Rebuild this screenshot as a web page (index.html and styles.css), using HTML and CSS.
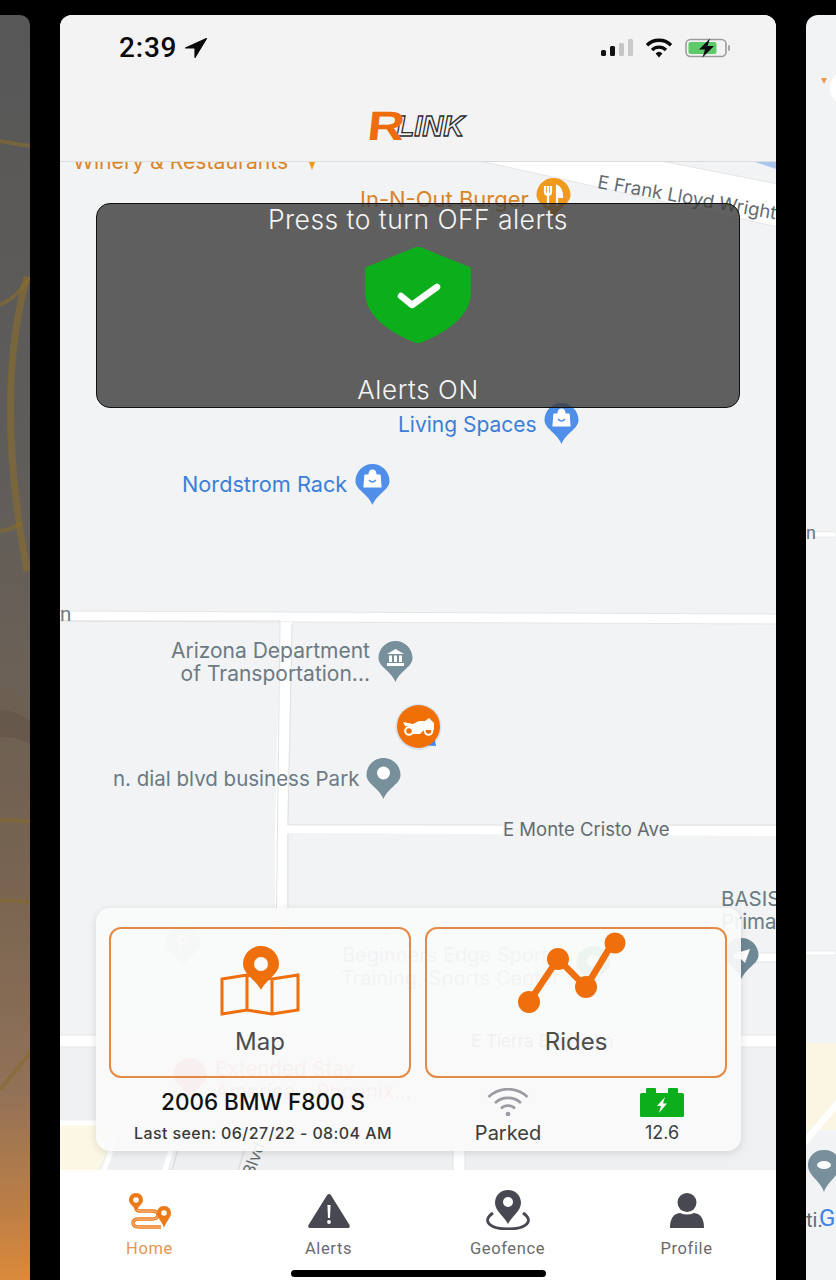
FILE: index.html
```html
<!DOCTYPE html>
<html lang="en">
<head>
<meta charset="utf-8">
<title>RLink</title>
<link rel="stylesheet" href="styles.css">
</head>
<body>
<div class="switcher">
  <aside class="side side-left">
    <svg class="side-art" viewBox="0 0 30 1265" aria-hidden="true">
      <g fill="none" stroke="#8a6d2c" stroke-opacity=".6">
        <path d="M0 126 Q15 129 30 131" stroke-width="4"/>
        <path d="M0 290 Q18 282 30 262" stroke-width="4"/>
        <path d="M27 262 Q-6 380 27 556" stroke-width="7"/>
        <path d="M0 516 Q14 514 21 508" stroke-width="4"/>
        <path d="M0 805 L30 806" stroke-width="4"/>
        <path d="M0 885 L30 887" stroke-width="4"/>
        <path d="M0 1075 L30 1038" stroke-width="4"/>
      </g>
      <path d="M0 695 Q16 695 30 706 V728 Q14 722 0 722Z" fill="#5c4d42" fill-opacity=".4"/>
      <path d="M0 670 Q14 672 30 684 V1265 H0Z" fill="#6f5a48" fill-opacity=".1"/>
    </svg>
  </aside>

  <main class="phone">
    <header class="top">
      <div class="status">
        <div class="clock"><span class="time">2:39</span>
          <svg class="loc" viewBox="0 0 22 20"><path d="M21.500 0.500 L0.500 10 H10 V19.500Z" fill="#0a0a0a" stroke="#0a0a0a" stroke-width="1.200" stroke-linejoin="round"/></svg>
        </div>
        <div class="status-icons">
          <svg class="signal" viewBox="0 0 32 18"><rect x="0" y="11" width="5" height="6" rx="1.500" fill="#111"/><rect x="9" y="7" width="5" height="10" rx="1.500" fill="#111"/><rect x="18" y="4" width="5" height="13" rx="1.500" fill="#c5c5c5"/><rect x="27" y="0" width="5" height="17" rx="1.500" fill="#c9c9c9"/></svg>
          <svg class="wifi-s" viewBox="0 0 28 20"><path d="M2 7.200 A17 17 0 0 1 26 7.200" fill="none" stroke="#0a0a0a" stroke-width="3.400"/><path d="M7 12 A10 10 0 0 1 21 12" fill="none" stroke="#0a0a0a" stroke-width="3.400"/><path d="M10.600 15.400 A5 5 0 0 1 17.400 15.400 L14 19.400Z" fill="#0a0a0a"/></svg>
          <svg class="batt-s" viewBox="0 0 46 20"><rect x="1" y="1.500" width="40" height="17" rx="4.500" fill="none" stroke="#9c9c9c" stroke-width="1.600"/><rect x="3.500" y="4" width="28" height="12" rx="2" fill="#5ccb67"/><rect x="43" y="7" width="2" height="6" rx="1" fill="#a8a8a8"/><path d="M25 0.500 L14 11.500 H20 L17.500 19.500 L29 8 H22.500Z" fill="#0a0a0a"/></svg>
        </div>
      </div>
      <div class="logo"><span class="logo-r">R</span><span class="logo-link">LINK</span></div>
    </header>

    <section class="map">
      <svg class="map-art" viewBox="60 161 716 1009" aria-hidden="true">
        <defs>
          <path id="pin" d="M0 -20 C-9.400 -20 -17 -12.400 -17 -3 C-17 6 -5 9 0 21 C5 9 17 6 17 -3 C17 -12.400 9.400 -20 0 -20Z"/>
        </defs>
        <path d="M755 161 L776 161 V168Z" fill="#a9c6ee"/>
        <g fill="#fff" stroke="#e3e5e7" stroke-width="1">
          <path d="M480 160 L661 160 L778 183 V226Z"/>
          <path d="M58 610 L778 613 V623 L58 620Z"/>
          <path d="M280 621 H292 L287 824 L778 825 V835 L287 832 L287 1040 H275 L275 832 Z" stroke="none"/>
          <path d="M58 1034 H778 V1046 H58Z"/>
          <path d="M740 952 H778 V961 H740Z"/>
        </g>
        <g fill="none" stroke="#dfe1e3">
          <path d="M60 620 H280 L275 1034"/>
          <path d="M292 623 L288 824 H778"/>
          <path d="M288 833 V1034"/>
        </g>
        <path d="M60 1047 H776 V1170 H60Z" fill="#eef0f1"/>
        <path d="M60 1122 H120 L98 1170 H60Z" fill="#fbf7e4"/>
        <path d="M60 1122 H180 Q170 1150 165 1170 M120 1122 L104 1170" fill="none" stroke="#fff" stroke-width="5"/>
        <path d="M180 1140 L172 1170 M250 1130 L238 1170" fill="none" stroke="#dcdedf" stroke-width="1.500"/>
        <path d="M453 1100 H465 V1170 H453Z" fill="#fff" stroke="#e0e2e3"/>

        <use href="#pin" x="553.500" y="197" fill="#ef9a1a"/>
        <path d="M545 185 V191 Q545 194 548 194 Q551 194 551 191 V185 M548 185 V205 M557 205 V185 Q562 187 562 196 H557" stroke="#fff" stroke-width="2.200" fill="none"/>
        <path d="M557 185 Q562 187 562 196 H557Z" fill="#fff"/>
        <path d="M307 156 H317 L312 169Z" fill="#ef9a1a"/>

        <use href="#pin" x="561.500" y="422" fill="#4f8fe9"/>
        <path d="M554 413 H569 L570 425 H553Z M558 413 Q558 408 561.500 408 Q565 408 565 413" fill="#fff" stroke="#fff" stroke-width="1.200" stroke-linejoin="round"/>
        <path d="M558 418 Q561.500 422 565 418" stroke="#4f8fe9" stroke-width="1.500" fill="none"/>
        <use href="#pin" x="372.500" y="483" fill="#4f8fe9"/>
        <path d="M365 474 H380 L381 486 H364Z M369 474 Q369 469 372.500 469 Q376 469 376 474" fill="#fff" stroke="#fff" stroke-width="1.200" stroke-linejoin="round"/>
        <path d="M369 479 Q372.500 483 376 479" stroke="#4f8fe9" stroke-width="1.500" fill="none"/>

        <use href="#pin" x="395.500" y="660" fill="#78909c"/>
        <path d="M395.500 648 L404 653 H387Z M387 662 H404 V665 H387Z M389 654.500 H392 V661 H389Z M394 654.500 H397 V661 H394Z M399 654.500 H402 V661 H399Z" fill="#fff"/>
        <use href="#pin" x="383.500" y="777" fill="#78909c"/>
        <circle cx="383.500" cy="772" r="6.500" fill="#fff"/>

        <use href="#pin" x="183" y="945" fill="#c5cbd6"/>
        <use href="#pin" x="593" y="965" fill="#5bab6e"/>
        <circle cx="593" cy="960" r="6" fill="#fff"/>
        <use href="#pin" x="741.500" y="957" fill="#6f8896"/>
        <path d="M733 953 L750 948 L745 962 L741 958 L735 958Z" fill="#fff"/>
        <use href="#pin" x="190" y="1077" fill="#e57373"/>

        <path d="M420 744 L434 734 L436 745Z" fill="#4285f4"/>
        <circle cx="418.500" cy="726" r="23" fill="#4285f4" fill-opacity=".16"/>
        <circle cx="418.500" cy="725.500" r="21.500" fill="#f07006"/>
        <g fill="#fff">
          <path d="M403 721 L413 723 L419 720 L425 720 L429 717 L434 722 L434 729 L424 729 L420 733 L413 733 L411 726 L405 725Z"/>
          <circle cx="409" cy="730" r="3.800" fill="none" stroke="#fff" stroke-width="2"/>
          <circle cx="428.500" cy="730" r="3.800" fill="none" stroke="#fff" stroke-width="2"/>
        </g>
      </svg>

      <span class="lbl food winery">Winery &amp; Restaurants</span>
      <span class="lbl food innout">In-N-Out Burger</span>
      <span class="lbl road frank">E Frank Lloyd Wright</span>
      <span class="lbl shop living">Living Spaces</span>
      <span class="lbl shop nordstrom">Nordstrom Rack</span>
      <span class="lbl grey edge-n">n</span>
      <span class="lbl grey adot">Arizona Department<br>of Transportation...</span>
      <span class="lbl grey dial">n. dial blvd business Park</span>
      <span class="lbl road monte">E Monte Cristo Ave</span>
      <span class="lbl grey basis">BASIS<br>Prima</span>
      <span class="lbl ghost beginners">Beginners Edge Sports<br>Training, Sports Center</span>
      <span class="lbl road tierra">E Tierra Buena Ln</span>
      <span class="lbl red extended">Extended Stay<br>America - Phoenix...</span>
      <span class="lbl road blvd">Blvd</span>
      <span class="lbl pin-p">P</span>

      <div class="alert">
        <p class="alert-title">Press to turn OFF alerts</p>
        <svg class="shield" viewBox="0 0 108 96"><path d="M54 0 L106 21 V46 C106 70 78 87 54 96 C30 87 2 70 2 46 V21Z" fill="#0dae1c" stroke="#0dae1c" stroke-width="1.500" stroke-linejoin="round"/><path d="M37 49 L48 58 L73 40" fill="none" stroke="#fff" stroke-width="6.500" stroke-linecap="round" stroke-linejoin="round"/></svg>
        <p class="alert-state">Alerts ON</p>
      </div>

      <div class="panel">
        <div class="actions">
          <button class="action">
            <svg class="action-icon" viewBox="0 0 80 70"><path d="M2 33 L27 29 L52 33 L78 29 V64 L52 68 L27 64 L2 68Z M27 29 V64 M52 33 V68" fill="none" stroke="#ee6f0c" stroke-width="3"/><path d="M41 0 C31 0 23 8 23 18 C23 28 36 34 41 44 C46 34 59 28 59 18 C59 8 51 0 41 0Z" fill="#ee6f0c"/><circle cx="41" cy="18" r="7" fill="#fafafa"/></svg>
            <span>Map</span>
          </button>
          <button class="action">
            <svg class="action-icon" viewBox="0 0 120 82"><path d="M13 70 L42 27 L70 55 L99 7" fill="none" stroke="#ee6f0c" stroke-width="6.500"/><circle cx="13" cy="70" r="11" fill="#ee6f0c"/><circle cx="42" cy="27" r="11" fill="#ee6f0c"/><circle cx="70" cy="55" r="11" fill="#ee6f0c"/><circle cx="99" cy="11" r="10.500" fill="#ee6f0c"/></svg>
            <span>Rides</span>
          </button>
        </div>
        <div class="info">
          <div class="vehicle">
            <strong class="vehicle-name">2006 BMW F800 S</strong>
            <span class="seen">Last seen: 06/27/22 - 08:04 AM</span>
          </div>
          <div class="stat">
            <svg class="stat-wifi" viewBox="0 0 42 28"><path d="M1.500 9 A28 28 0 0 1 40.500 9" fill="none" stroke="#9a9ca2" stroke-width="2.600"/><path d="M8 15 A19 19 0 0 1 34 15" fill="none" stroke="#9a9ca2" stroke-width="2.600"/><path d="M14 20.500 A10 10 0 0 1 28 20.500" fill="none" stroke="#9a9ca2" stroke-width="2.600"/><circle cx="21" cy="26" r="2.300" fill="#9a9ca2"/></svg>
            <span class="parked">Parked</span>
          </div>
          <div class="stat">
            <svg class="stat-batt" viewBox="0 0 44 30"><rect x="6" y="0" width="10" height="6" rx="1" fill="#0dae1c"/><rect x="28" y="0" width="10" height="6" rx="1" fill="#0dae1c"/><rect x="0" y="5" width="44" height="24" rx="1.500" fill="#0dae1c"/><path d="M25 9 L17 18 H21 L19 25 L27 15.500 H23Z" fill="#fff"/></svg>
            <span>12.6</span>
          </div>
        </div>
      </div>
    </section>

    <nav class="tabs">
      <a class="tab tab-on">
        <svg class="tab-icon" viewBox="0 0 44 36"><path d="M8 14 V15 Q8 18 12 18 H24 Q30 18 30 22 Q30 26 24 26 H11 Q5 26 5 30 Q5 34 11 34 H33" fill="none" stroke="#ee7a17" stroke-width="3.400"/><path d="M8 14 V15 Q8 18 12 18 H24 Q30 18 30 22 Q30 26 24 26 H11 Q5 26 5 30 Q5 34 11 34 H33" fill="none" stroke="#fbd9bd" stroke-width=".8"/><path d="M8 0 C3.500 0 1 3.500 1 7 C1 11 6 13 8 18 C10 13 15 11 15 7 C15 3.500 12.500 0 8 0Z" fill="#ee7a17"/><circle cx="8" cy="7" r="2.800" fill="#fff"/><path d="M36 13 C31.500 13 29 16.500 29 20 C29 25 34 28 36 35 C38 28 43 25 43 20 C43 16.500 40.500 13 36 13Z" fill="#ee7a17"/><circle cx="36" cy="20" r="2.800" fill="#fff"/></svg>
        <span>Home</span>
      </a>
      <a class="tab">
        <svg class="tab-icon" viewBox="0 0 44 36"><path d="M22 1 Q23.500 1 24.500 3 L42.500 32 Q43.500 35 41 35 H3 Q0.500 35 1.500 32 L19.500 3 Q20.500 1 22 1Z" fill="#484852"/><path d="M20.400 12 H23.600 L23 25 H21Z" fill="#fff"/><circle cx="22" cy="29" r="1.900" fill="#fff"/></svg>
        <span>Alerts</span>
      </a>
      <a class="tab">
        <svg class="tab-icon tab-geo" viewBox="0 0 50 40"><path d="M25 0 C17 0 12 6 12 13 C12 21 21 26 25 34 C29 26 38 21 38 13 C38 6 33 0 25 0Z" fill="#484852"/><circle cx="25" cy="12" r="5" fill="#fff"/><path d="M10 23 C-2 31 7 39 25 39 C43 39 52 31 40 23" fill="none" stroke="#484852" stroke-width="2.800"/></svg>
        <span>Geofence</span>
      </a>
      <a class="tab">
        <svg class="tab-icon" viewBox="0 0 44 36"><circle cx="22" cy="9.500" r="9.500" fill="#484852"/><path d="M5 35 Q5 21 15 20 Q22 23 29 20 Q39 21 39 35 H5Z" fill="#484852"/></svg>
        <span>Profile</span>
      </a>
      <i class="home-bar"></i>
    </nav>
  </main>

  <aside class="side side-right">
    <svg class="side-art" viewBox="806 15 30 1265" aria-hidden="true">
      <rect x="806" y="15" width="30" height="1265" fill="#f1f3f4"/>
      <circle cx="848" cy="88" r="18" fill="#fff"/>
      <path d="M821 78 H827 L824 84Z" fill="#e99a4a"/>
      <path d="M813 532 H836 V537 H813Z M806 951 H836 V955 H806Z" fill="#fff" stroke="#e2e4e6" stroke-width=".6"/>
      <path d="M806 1043 H836 V1130 H806Z" fill="#faf6e3"/>
      <path d="M806 1146 L836 1110 V1100 L806 1135Z" fill="#fff"/>
      <path d="M824 1150 C813 1150 808 1158 808 1165 C808 1176 820 1180 824 1192 C828 1180 840 1176 840 1165 C840 1158 835 1150 824 1150Z" fill="#78909c"/>
      <ellipse cx="824" cy="1165" rx="7" ry="4" fill="#fff"/>
    </svg>
    <span class="side-n">n</span>
    <span class="side-ti">ti.</span>
    <span class="side-g">G</span>
  </aside>
</div>
</body>
</html>
```

FILE: styles.css
```css
* { box-sizing: border-box; }
html, body { margin: 0; height: 100%; background: #000; overflow: hidden; }
body { font-family: "Inter", "Liberation Sans", sans-serif; }

.switcher { display: flex; gap: 30px; height: 1280px; padding-top: 15px; }

.side { position: relative; width: 30px; flex: none; overflow: hidden; }
.side-left {
  border-top-right-radius: 10px;
  background: linear-gradient(180deg, #575757 0%, #5f5d5a 35%, #6d6155 55%, #7c6753 70%, #96755a 85%, #c98445 95%, #e8913a 100%);
}
.side-right { border-top-left-radius: 12px; }
.side-art { display: block; width: 30px; height: 1265px; }
.side-n, .side-ti, .side-g { position: absolute; font-family: "Roboto", sans-serif; line-height: 1; }
.side-n { left: 0; top: 509px; font-size: 18px; color: #6a7680; }
.side-ti { left: 0; top: 1195px; font-size: 20px; color: #5f6b75; }
.side-g { left: 13px; top: 1191px; font-size: 24px; color: #3f83e6; }

.phone {
  width: 716px; flex: none; display: flex; flex-direction: column;
  border-radius: 12px 12px 0 0; overflow: hidden; background: #fff;
}

.top { height: 147px; flex: none; background: #f3f3f3; border-bottom: 1px solid #dcdcdc; padding: 18px 45px 0 59px; }
.status { display: flex; justify-content: space-between; align-items: center; height: 30px; }
.clock { display: flex; align-items: center; gap: 8px; }
.time { font-family: "Roboto", sans-serif; font-size: 28px; font-weight: 500; color: #0a0a0a; line-height: 30px; letter-spacing: .8px; }
.loc { width: 22px; height: 20px; }
.status-icons { display: flex; align-items: center; gap: 12px; }
.signal { width: 32px; height: 18px; }
.wifi-s { width: 28px; height: 20px; }
.batt-s { width: 46px; height: 20px; }

.logo { display: flex; justify-content: center; align-items: center; height: 34px; margin: 46px 11px 0 0; font-family: "Liberation Sans", sans-serif; font-weight: 700; font-style: italic; line-height: 1; }
.logo-r { color: #ef6c0a; font-size: 41px; font-style: normal; font-weight: 700; transform: skewX(-6deg) scaleX(1.25); transform-origin: right center; }
.logo-link { margin-left: -8px; font-size: 29px; color: #f3f3f3; -webkit-text-stroke: 1.3px #2c2c2c; }

.map { position: relative; flex: 1; min-height: 0; overflow: hidden; background: #f1f3f4; }
.map-art { position: absolute; inset: 0; width: 716px; height: 1009px; display: block; }

.lbl { position: absolute; font-family: "Inter", sans-serif; white-space: nowrap; line-height: 23px; }
.food { color: #d9852a; font-size: 21px; }
.shop { color: #3b7fd9; font-size: 21px; }
.grey { color: #6c7a83; font-size: 20.5px; }
.ghost { color: #8ea0a8; font-size: 20px; }
.red { color: #e57373; font-size: 20.5px; }
.road { color: #646b70; font-size: 18.5px; line-height: 20px; }
.winery { left: 13px; top: -12px; font-size: 21.2px; }
.innout { left: 300px; top: 26px; font-size: 22px; }
.frank { left: 538px; top: 9px; transform: rotate(10deg); transform-origin: left center; font-size: 18.6px; }
.living { left: 338px; top: 251px; }
.nordstrom { left: 122px; top: 311px; font-size: 21.7px; }
.edge-n { left: 0; top: 441px; font-family: "Roboto", sans-serif; }
.adot { right: 406px; top: 477px; text-align: right; font-size: 21px; }
.dial { left: 53px; top: 605px; }
.monte { left: 443px; top: 657px; background: #f1f3f4; }
.basis { left: 661px; top: 725px; }
.beginners { left: 281px; top: 782px; text-align: center; }
.tierra { left: 411px; top: 869px; font-size: 17px; }
.extended { left: 155px; top: 895px; }
.blvd { left: 176px; top: 987px; transform: rotate(-70deg); font-size: 17px; }
.pin-p { left: 117px; top: 769px; font-size: 18px; color: #fff; font-weight: 600; }

.alert {
  position: absolute; left: 36px; top: 41px; width: 644px; height: 205px;
  display: flex; flex-direction: column; align-items: center;
  border: 1px solid #111; border-radius: 14px;
  background: rgba(60, 60, 60, .81); color: #f5f5f5;
}
.alert-title { margin: 0; font-size: 26.5px; line-height: 30px; font-weight: 300; letter-spacing: .45px; }
.shield { width: 108px; height: 96px; margin-top: 13px; }
.alert-state { margin: 33px 0 0; font-size: 26px; line-height: 28px; font-weight: 300; letter-spacing: .6px; }

.panel {
  position: absolute; left: 36px; top: 746px; width: 645px; height: 243px;
  padding: 19px 13px 0; border-radius: 14px;
  background: rgba(250, 250, 250, .93);
  box-shadow: 0 2px 8px rgba(0, 0, 0, .12);
}
.actions { display: grid; grid-template-columns: 302px 302px; gap: 14px; }
.action {
  height: 151px; padding: 0; display: flex; flex-direction: column; align-items: center;
  border: 2px solid #e58a45; border-radius: 12px; background: transparent;
  font-family: "Inter", sans-serif; font-size: 24px; color: #4d4d4d;
}
.action span { margin-top: auto; margin-bottom: 21px; line-height: 26px; }
.action-icon { display: block; margin-top: 17px; width: 80px; height: 70px; }
.action:nth-child(2) .action-icon { width: 120px; height: 82px; margin-top: 3px; }

.info { display: grid; grid-template-columns: 308px 182px 126px; }
.vehicle { display: flex; flex-direction: column; align-items: center; padding-top: 11px; }
.vehicle-name { font-size: 22.5px; font-weight: 500; line-height: 26px; color: #111; }
.seen { margin-top: 8px; font-size: 16px; line-height: 20px; font-weight: 500; letter-spacing: .4px; color: #3a3a3a; }
.stat { display: flex; flex-direction: column; align-items: center; font-size: 18px; line-height: 22px; color: #3d3d3d; padding-top: 10px; }
.parked { font-size: 20px; }
.stat-wifi { width: 42px; height: 28px; margin-bottom: 6px; }
.stat-batt { width: 44px; height: 30px; margin-bottom: 4px; }

.tabs { position: relative; height: 110px; flex: none; display: grid; grid-template-columns: repeat(4, 1fr); background: #fff; }
.tab { display: flex; flex-direction: column; align-items: center; padding-top: 23px; font-family: "Roboto", sans-serif; font-size: 16.5px; line-height: 18px; letter-spacing: .6px; color: #6a6a6e; }
.tab-on { color: #e8954f; }
.tab-icon { width: 44px; height: 36px; margin-bottom: 11px; }
.tab-geo { width: 50px; height: 40px; margin-top: -3px; margin-bottom: 10px; }
.home-bar { position: absolute; left: 231px; bottom: 3px; width: 255px; height: 7px; border-radius: 4px; background: #000; }
```
